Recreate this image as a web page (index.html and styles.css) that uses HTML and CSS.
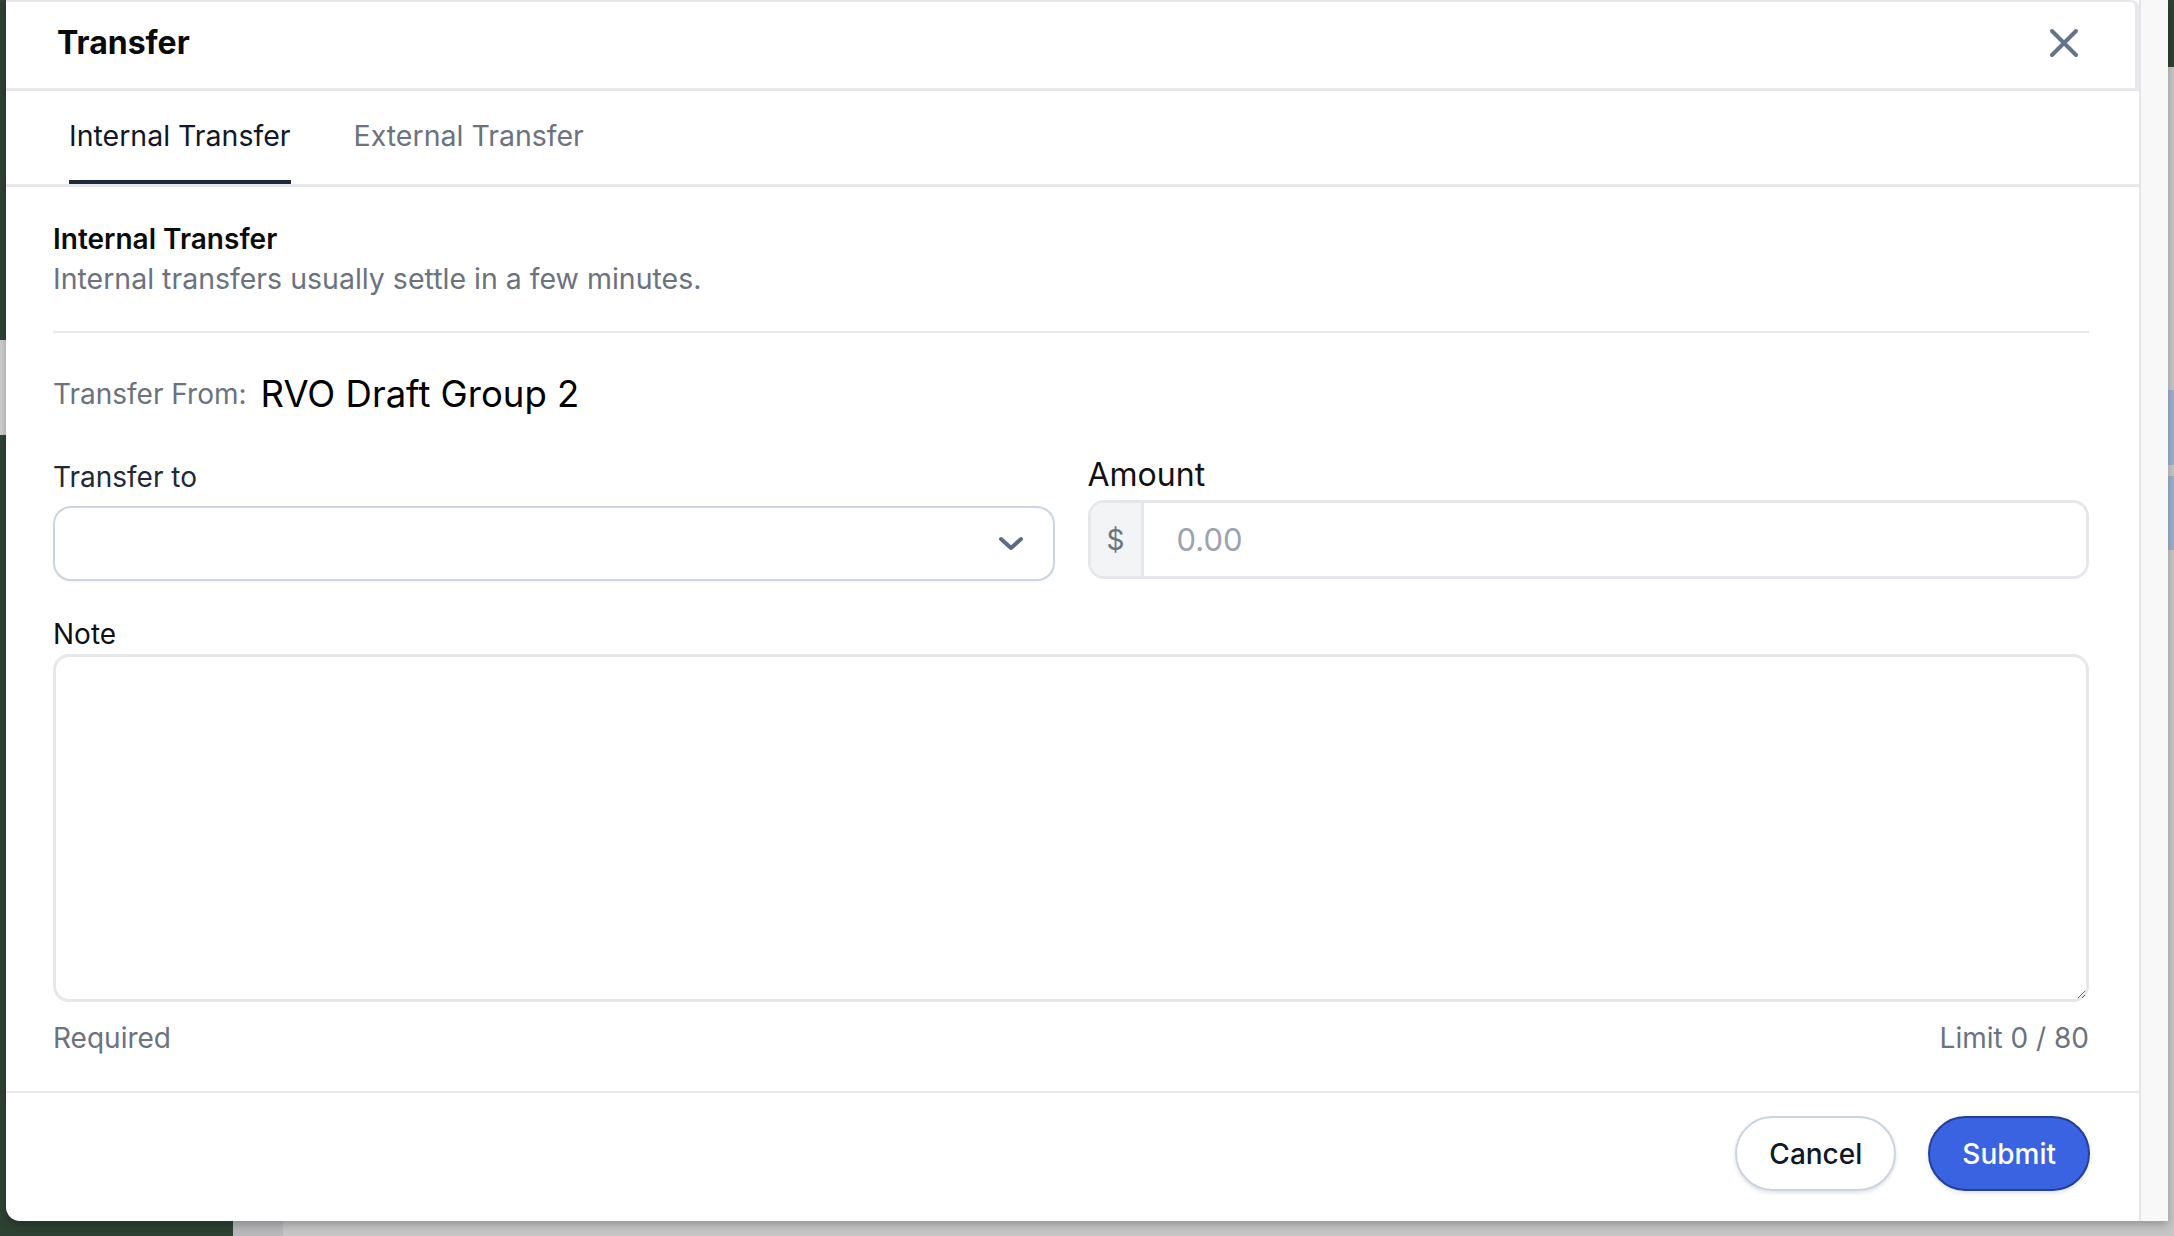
FILE: index.html
```html
<!DOCTYPE html>
<html lang="en">
<head>
  <meta charset="UTF-8">
  <meta name="viewport" content="width=device-width, initial-scale=1.0">
  <title>Transfer</title>
  <link rel="stylesheet" href="styles.css">
</head>
<body>
  <div class="modal">
    <div class="modal-main">
      <div class="modal-header">
        <h1 class="modal-title">Transfer</h1>
        <button class="close-btn" aria-label="Close">
          <svg width="30" height="30" viewBox="0 0 30 30" fill="none" stroke="#64748b" stroke-width="4" stroke-linecap="round">
            <path d="M3 3 L27 27 M27 3 L3 27"/>
          </svg>
        </button>
      </div>

      <div class="tabs">
        <div class="tab active">Internal Transfer</div>
        <div class="tab">External Transfer</div>
      </div>

      <div class="modal-body">
        <div class="intro">
          <h2>Internal Transfer</h2>
          <p>Internal transfers usually settle in a few minutes.</p>
        </div>

        <div class="from-row">
          <span class="from-label">Transfer From:</span>
          <span class="from-value">RVO Draft Group 2</span>
        </div>

        <div class="field-grid">
          <div class="field">
            <label class="label label-dark">Transfer to</label>
            <div class="select">
              <svg width="26" height="16" viewBox="0 0 26 16" fill="none" stroke="#5b6b82" stroke-width="4" stroke-linecap="round" stroke-linejoin="round">
                <path d="M3 3 L13 12 L23 3"/>
              </svg>
            </div>
          </div>
          <div class="field">
            <label class="label label-large">Amount</label>
            <div class="amount-input">
              <span class="prefix">$</span>
              <input type="text" placeholder="0.00">
            </div>
          </div>
        </div>

        <div class="note-field">
          <label class="label">Note</label>
          <textarea></textarea>
          <div class="hint-row">
            <span>Required</span>
            <span>Limit 0 / 80</span>
          </div>
        </div>
      </div>

      <div class="modal-footer">
        <button class="btn btn-cancel">Cancel</button>
        <button class="btn btn-submit">Submit</button>
      </div>
    </div>
    <div class="scroll-track"></div>
  </div>
</body>
</html>
```

FILE: styles.css
```css
* {
  margin: 0;
  padding: 0;
  box-sizing: border-box;
}

body {
  font-family: "Inter", "Liberation Sans", sans-serif;
  width: 2174px;
  height: 1236px;
  overflow: hidden;
  display: flex;
  padding: 0 6px 15px 6px;
  /* bits of the page behind the dialog */
  background:
    linear-gradient(#2e4233, #2e4233) right top / 6px 67px no-repeat,
    linear-gradient(#9fb0cc, #9fb0cc) right 390px / 6px 75px no-repeat,
    linear-gradient(#9fb0cc, #9fb0cc) right 476px / 6px 74px no-repeat,
    linear-gradient(#cfcfcf, #cfcfcf) left 340px / 6px 95px no-repeat,
    linear-gradient(to right, #2e4233 233px, #b9b9bb 233px, #b9b9bb 283px, #c6c6c6 283px);
}

.modal {
  flex: 1;
  display: flex;
  background-color: #fff;
  border-bottom-left-radius: 14px;
  box-shadow: 0 4px 10px rgba(0, 0, 0, 0.25);
  overflow: hidden;
}

.modal-main {
  flex: 1;
  display: flex;
  flex-direction: column;
}

.scroll-track {
  width: 29px;
  background-color: #f8f8f8;
  border-left: 2px solid #e6e6e6;
}

/* header */
.modal-header {
  height: 92px;
  display: flex;
  align-items: center;
  justify-content: space-between;
  padding: 0 56px 5px 51px;
  border-top: 2px solid #e5e7eb;
  border-right: 4px solid #e5e7eb;
  border-bottom: 3px solid #e5e7eb;
  border-top-right-radius: 8px;
}

.modal-title {
  font-size: 32px;
  font-weight: 700;
  color: #0b0b0b;
}

.close-btn {
  background: none;
  border: none;
  display: flex;
  cursor: pointer;
}

/* tabs */
.tabs {
  display: flex;
  gap: 63px;
  padding-left: 63px;
  border-bottom: 3px solid #e5e7eb;
}

.tab {
  font-size: 28.5px;
  line-height: 39px;
  padding: 25px 0 25px;
  color: #6b7280;
  border-bottom: 4px solid transparent;
}

.tab.active {
  color: #111827;
  border-bottom-color: #1f2937;
}

/* body */
.modal-body {
  padding: 32px 50px 33px 47px;
}

.intro {
  padding-bottom: 32px;
  border-bottom: 2px solid #e5e7eb;
}

.intro h2 {
  font-size: 28px;
  font-weight: 600;
  line-height: 40px;
  color: #0b0b0b;
}

.intro p {
  font-size: 28.5px;
  line-height: 40px;
  color: #6b7280;
}

.from-row {
  display: flex;
  align-items: center;
  gap: 14px;
  margin-top: 39px;
  height: 44px;
}

.from-label {
  font-size: 28px;
  color: #6b7280;
}

.from-value {
  font-size: 36.5px;
  color: #000;
}

.field-grid {
  display: grid;
  grid-template-columns: 1fr 1fr;
  gap: 33px;
  align-items: end;
  margin-top: 39px;
}

.label {
  display: block;
  font-size: 28px;
  line-height: 40px;
  color: #111;
}

.label-dark {
  color: #1f2937;
}

.label-large {
  font-size: 32px;
}

.field .label {
  margin-bottom: 9px;
}

.field .label-large {
  margin-bottom: 5px;
}

.select {
  height: 75px;
  border: 2px solid #cbd5e1;
  border-radius: 18px;
  display: flex;
  align-items: center;
  justify-content: flex-end;
  padding-right: 29px;
  box-shadow: 0 1px 2px rgba(0, 0, 0, 0.06);
}

.amount-input {
  height: 79px;
  margin-bottom: 2px;
  border: 3px solid #e5e7eb;
  border-radius: 16px;
  display: flex;
  overflow: hidden;
}

.amount-input .prefix {
  width: 53px;
  background-color: #f3f4f6;
  border-right: 3px solid #e5e7eb;
  display: flex;
  align-items: center;
  justify-content: center;
  font-size: 28px;
  color: #6b7280;
}

.amount-input input {
  flex: 1;
  border: none;
  outline: none;
  padding-left: 33px;
  font-family: inherit;
  font-size: 31px;
  color: #111;
}

.amount-input input::placeholder {
  color: #9ca3af;
}

.note-field {
  margin-top: 33px;
}

.note-field textarea {
  display: block;
  width: 100%;
  height: 348px;
  border: 3px solid #e5e7eb;
  border-radius: 16px;
  resize: vertical;
  font-family: inherit;
  font-size: 28px;
  outline: none;
}

.hint-row {
  display: flex;
  justify-content: space-between;
  margin-top: 16px;
  font-size: 28px;
  line-height: 40px;
  color: #6b7280;
}

/* footer */
.modal-footer {
  display: flex;
  justify-content: flex-end;
  gap: 32px;
  padding: 23px 49px 30px 47px;
  border-top: 2px solid #e5e7eb;
}

.btn {
  height: 75px;
  padding: 0 32px;
  border-radius: 40px;
  font-family: inherit;
  font-size: 28px;
  font-weight: 500;
  cursor: pointer;
}

.btn-cancel {
  background-color: #fff;
  color: #111827;
  border: 2px solid #cbd5e1;
  box-shadow: 0 2px 4px rgba(0, 0, 0, 0.12);
}

.btn-submit {
  background-color: #3a63e2;
  color: #fff;
  border: 2px solid #233f99;
  box-shadow: 0 2px 4px rgba(0, 0, 0, 0.12);
}
```
